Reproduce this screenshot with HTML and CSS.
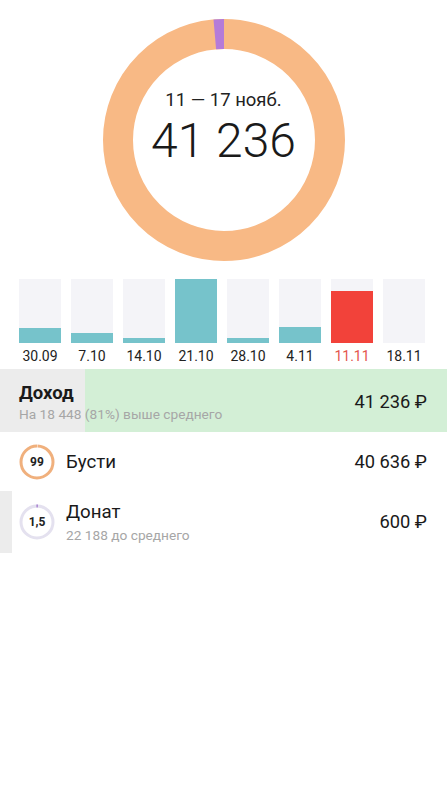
FILE: index.html
```html
<!DOCTYPE html>
<html lang="ru">
<head>
    <meta charset="UTF-8">
    <meta name="viewport" content="width=device-width, initial-scale=1.0">
    <title>Доход</title>
    <link rel="stylesheet" href="styles.css">
</head>
<body>
    <div class="donut">
        <svg width="244" height="244" viewBox="0 0 244 244">
            <circle cx="122" cy="122" r="106" fill="none" stroke="#f8b985" stroke-width="30"/>
            <circle cx="122" cy="122" r="106" fill="none" stroke="#b57bd8" stroke-width="30"
                    stroke-dasharray="10 656" stroke-dashoffset="10" transform="rotate(-90 122 122)"/>
        </svg>
        <div class="donut-text">
            <div class="period">11 — 17 нояб.</div>
            <div class="total">41 236</div>
        </div>
    </div>

    <div class="weeks">
        <div class="week"><div class="track"><div class="fill" style="height: 15px"></div></div><span>30.09</span></div>
        <div class="week"><div class="track"><div class="fill" style="height: 10px"></div></div><span>7.10</span></div>
        <div class="week"><div class="track"><div class="fill" style="height: 5px"></div></div><span>14.10</span></div>
        <div class="week"><div class="track"><div class="fill" style="height: 64px"></div></div><span>21.10</span></div>
        <div class="week"><div class="track"><div class="fill" style="height: 5px"></div></div><span>28.10</span></div>
        <div class="week"><div class="track"><div class="fill" style="height: 16px"></div></div><span>4.11</span></div>
        <div class="week current"><div class="track"><div class="fill" style="height: 52px"></div></div><span>11.11</span></div>
        <div class="week"><div class="track"><div class="fill" style="height: 0"></div></div><span>18.11</span></div>
    </div>

    <div class="row income">
        <div class="row-text">
            <div class="row-title">Доход</div>
            <div class="row-sub">На 18 448 (81%) выше среднего</div>
        </div>
        <div class="amount">41 236 ₽</div>
    </div>

    <div class="row source">
        <div class="badge">
            <svg width="36" height="36" viewBox="0 0 36 36">
                <circle cx="18" cy="18" r="16" fill="none" stroke="#f0b07d" stroke-width="3"
                        stroke-dasharray="99.5 1" stroke-dashoffset="-0.5" transform="rotate(-90 18 18)"/>
            </svg>
            <span>99</span>
        </div>
        <div class="row-text">
            <div class="row-name">Бусти</div>
        </div>
        <div class="amount">40 636 ₽</div>
    </div>

    <div class="row source donat">
        <div class="badge">
            <svg width="36" height="36" viewBox="0 0 36 36">
                <circle cx="18" cy="18" r="16" fill="none" stroke="#e4e1ef" stroke-width="3"/>
                <circle cx="18" cy="18" r="16" fill="none" stroke="#a77fd0" stroke-width="3"
                        stroke-dasharray="1.5 99" transform="rotate(-92 18 18)"/>
            </svg>
            <span>1,5</span>
        </div>
        <div class="row-text">
            <div class="row-name">Донат</div>
            <div class="row-sub">22 188 до среднего</div>
        </div>
        <div class="amount">600 ₽</div>
    </div>
</body>
</html>
```

FILE: styles.css
```css
body {
    margin: 0;
    font-family: Roboto, 'Liberation Sans', sans-serif;
    background: white;
    color: #1c1c1c;
}
.donut {
    position: relative;
    width: 244px;
    height: 244px;
    margin: 18px auto 0;
    padding-left: 1px;
}
.donut svg {
    display: block;
}
.donut-text {
    position: absolute;
    top: 0;
    left: 0;
    right: 0;
    bottom: 0;
    display: flex;
    flex-direction: column;
    align-items: center;
    padding-top: 71px;
    box-sizing: border-box;
}
.period {
    font-size: 18.5px;
    line-height: 22px;
    color: #222;
}
.total {
    font-size: 48px;
    font-weight: 300;
    line-height: 56px;
    margin-top: 2px;
    color: #1a1a1a;
}
.weeks {
    display: grid;
    grid-template-columns: repeat(8, 42px);
    column-gap: 10px;
    padding: 17px 0 0 19px;
}
.week {
    display: flex;
    flex-direction: column;
    align-items: center;
}
.track {
    width: 42px;
    height: 64px;
    background: #f4f4f8;
    display: flex;
    align-items: flex-end;
}
.fill {
    width: 100%;
    background: #76c3cb;
}
.week span {
    font-size: 14px;
    line-height: 20px;
    margin-top: 3px;
    color: #222;
}
.week.current .fill {
    background: #f2423a;
}
.week.current span {
    color: #e4554d;
}
.row {
    display: flex;
    align-items: center;
    padding: 0 20px 0 19px;
    box-sizing: border-box;
}
.income {
    height: 63px;
    margin-top: 3px;
    padding-top: 4px;
    background: linear-gradient(to right, #ececec 85px, #d3efd6 85px);
}
.row-text {
    flex: 1;
}
.row-title {
    font-size: 18.5px;
    font-weight: 700;
    line-height: 22px;
    color: #1a1a1a;
}
.row-sub {
    font-size: 13.7px;
    line-height: 18px;
    color: #a6a6a6;
    margin-top: 1px;
}
.amount {
    font-size: 18.3px;
    line-height: 22px;
    color: #1a1a1a;
}
.income .amount {
    margin-top: -2px;
}
.source {
    height: 59px;
}
.donat {
    height: 62px;
    background: linear-gradient(to right, #ececec 12px, white 12px);
}
.badge {
    position: relative;
    width: 36px;
    height: 36px;
    margin-right: 11px;
}
.badge svg {
    display: block;
}
.badge span {
    position: absolute;
    top: 0;
    left: 0;
    right: 0;
    bottom: 0;
    display: flex;
    align-items: center;
    justify-content: center;
    font-size: 12px;
    font-weight: 700;
    color: #222;
}
.row-name {
    font-size: 18.7px;
    line-height: 24px;
    color: #1a1a1a;
}
.donat .row-sub {
    margin-top: 2px;
}
```
